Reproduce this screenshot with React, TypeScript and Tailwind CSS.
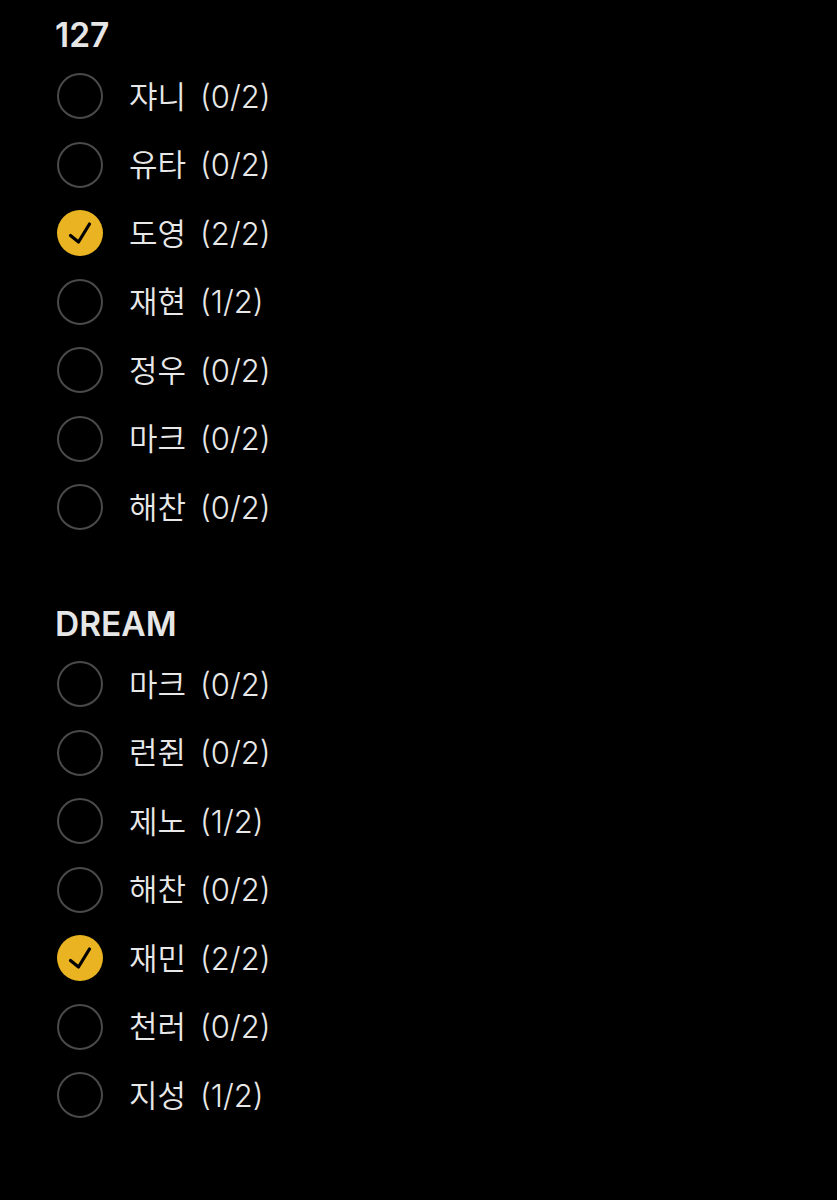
import React from "react";

type Item = { name: string; count: string; checked?: boolean };

const sections: { title: string; items: Item[] }[] = [
  {
    title: "127",
    items: [
      { name: "쟈니", count: "(0/2)" },
      { name: "유타", count: "(0/2)" },
      { name: "도영", count: "(2/2)", checked: true },
      { name: "재현", count: "(1/2)" },
      { name: "정우", count: "(0/2)" },
      { name: "마크", count: "(0/2)" },
      { name: "해찬", count: "(0/2)" },
    ],
  },
  {
    title: "DREAM",
    items: [
      { name: "마크", count: "(0/2)" },
      { name: "런쥔", count: "(0/2)" },
      { name: "제노", count: "(1/2)" },
      { name: "해찬", count: "(0/2)" },
      { name: "재민", count: "(2/2)", checked: true },
      { name: "천러", count: "(0/2)" },
      { name: "지성", count: "(1/2)" },
    ],
  },
];

function Radio({ checked }: { checked?: boolean }) {
  if (checked) {
    return (
      <div className="w-[46px] h-[46px] rounded-full bg-[#e9b322] flex items-center justify-center shrink-0">
        <svg width="46" height="46" viewBox="0 0 46 46">
          <path
            d="M13.5 25.5 L21.5 32 L32.5 14"
            fill="none"
            stroke="#000"
            strokeWidth="3.2"
            strokeLinecap="round"
            strokeLinejoin="round"
          />
        </svg>
      </div>
    );
  }
  return <div className="w-[46px] h-[46px] rounded-full border-[2.5px] border-[#4a4a4a] shrink-0" />;
}

export default function App() {
  return (
    <div
      className="min-h-[1200px] w-full bg-black pt-[18px] pl-[55px]"
      style={{ fontFamily: "Inter, 'Noto Sans CJK KR', sans-serif" }}
    >
      {sections.map((s, i) => (
        <div key={s.title} className={i > 0 ? "mt-[65px]" : ""}>
          <div className="h-[36px] flex items-center text-[33.5px] font-semibold text-[#e6e6e6] leading-none">
            {s.title}
          </div>
          <div className="mt-[7.75px] flex flex-col">
            {s.items.map((it) => (
              <div key={it.name} className="h-[68.5px] flex items-center pl-[2px]">
                <Radio checked={it.checked} />
                <span className="ml-[26px] flex items-center gap-[14px] text-[31px] font-[350] text-[#e8e8e8] leading-none">
                  <span>{it.name}</span>
                  <span>{it.count}</span>
                </span>
              </div>
            ))}
          </div>
        </div>
      ))}
    </div>
  );
}
